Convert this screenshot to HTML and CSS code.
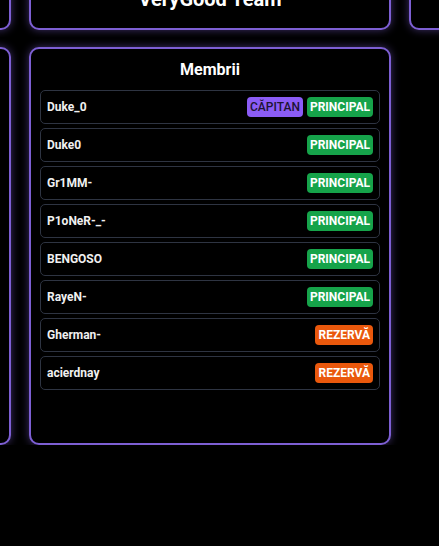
FILE: index.html
```html
<!DOCTYPE html>
<html lang="ro">
<head>
<meta charset="utf-8">
<title>VeryGood Team</title>
<link rel="stylesheet" href="styles.css">
</head>
<body>
<div class="board">
  <section class="card card-top"></section>
  <section class="card card-top"><h2 class="team-title">VeryGood Team</h2></section>
  <section class="card card-top"></section>

  <section class="card card-side"></section>
  <section class="card card-list">
    <h3 class="list-title">Membrii</h3>
    <ul class="members">
      <li class="member"><span class="name">Duke_0</span><span class="badges"><span class="badge badge-cap">CĂPITAN</span><span class="badge badge-main">PRINCIPAL</span></span></li>
      <li class="member"><span class="name">Duke0</span><span class="badges"><span class="badge badge-main">PRINCIPAL</span></span></li>
      <li class="member"><span class="name">Gr1MM-</span><span class="badges"><span class="badge badge-main">PRINCIPAL</span></span></li>
      <li class="member"><span class="name">P1oNeR-_-</span><span class="badges"><span class="badge badge-main">PRINCIPAL</span></span></li>
      <li class="member"><span class="name">BENGOSO</span><span class="badges"><span class="badge badge-main">PRINCIPAL</span></span></li>
      <li class="member"><span class="name">RayeN-</span><span class="badges"><span class="badge badge-main">PRINCIPAL</span></span></li>
      <li class="member"><span class="name">Gherman-</span><span class="badges"><span class="badge badge-res">REZERVĂ</span></span></li>
      <li class="member"><span class="name">acierdnay</span><span class="badges"><span class="badge badge-res">REZERVĂ</span></span></li>
    </ul>
  </section>
</div>
</body>
</html>
```

FILE: styles.css
```css
html, body {
  margin: 0;
  padding: 0;
  background: #000;
  overflow: hidden;
}

body {
  font-family: Roboto, "Noto Sans", Arial, sans-serif;
  color: #f2f2f2;
}

.board {
  display: grid;
  grid-template-columns: 362px 362px 362px;
  gap: 17px 18px;
  margin-left: -351px;
  margin-top: -32px;
}

.card {
  box-sizing: border-box;
  border: 2px solid #7d5fd3;
  border-radius: 10px;
  background: #000;
  box-shadow: 0 0 9px rgba(125, 95, 211, 0.5);
}

.card-top {
  padding: 16px 9px;
}

.team-title {
  margin: 0;
  font-size: 20px;
  line-height: 26px;
  font-weight: 700;
  text-align: center;
  color: #fff;
}

.card-list {
  min-height: 398px;
  padding: 10px 9px 9px;
}

.list-title {
  margin: 0 0 9px;
  font-size: 16px;
  line-height: 22px;
  font-weight: 700;
  text-align: center;
  color: #fff;
}

.members {
  list-style: none;
  margin: 0;
  padding: 0;
  display: flex;
  flex-direction: column;
  gap: 4px;
}

.member {
  box-sizing: border-box;
  height: 34px;
  display: flex;
  align-items: center;
  justify-content: space-between;
  padding: 0 6px;
  border: 1px solid #2e3442;
  border-radius: 5px;
}

.name {
  font-size: 12px;
  font-weight: 700;
  color: #f0f0f0;
}

.badges {
  display: flex;
  gap: 4px;
}

.badge {
  height: 20px;
  line-height: 20px;
  padding: 0 3px;
  border-radius: 4px;
  font-size: 12px;
  font-weight: 700;
  color: #fff;
}

.badge-cap {
  background: #8b5cf6;
  color: #1d1433;
  font-weight: 500;
}

.badge-main {
  background: #16a34a;
}

.badge-res {
  background: #ea580c;
}
```
